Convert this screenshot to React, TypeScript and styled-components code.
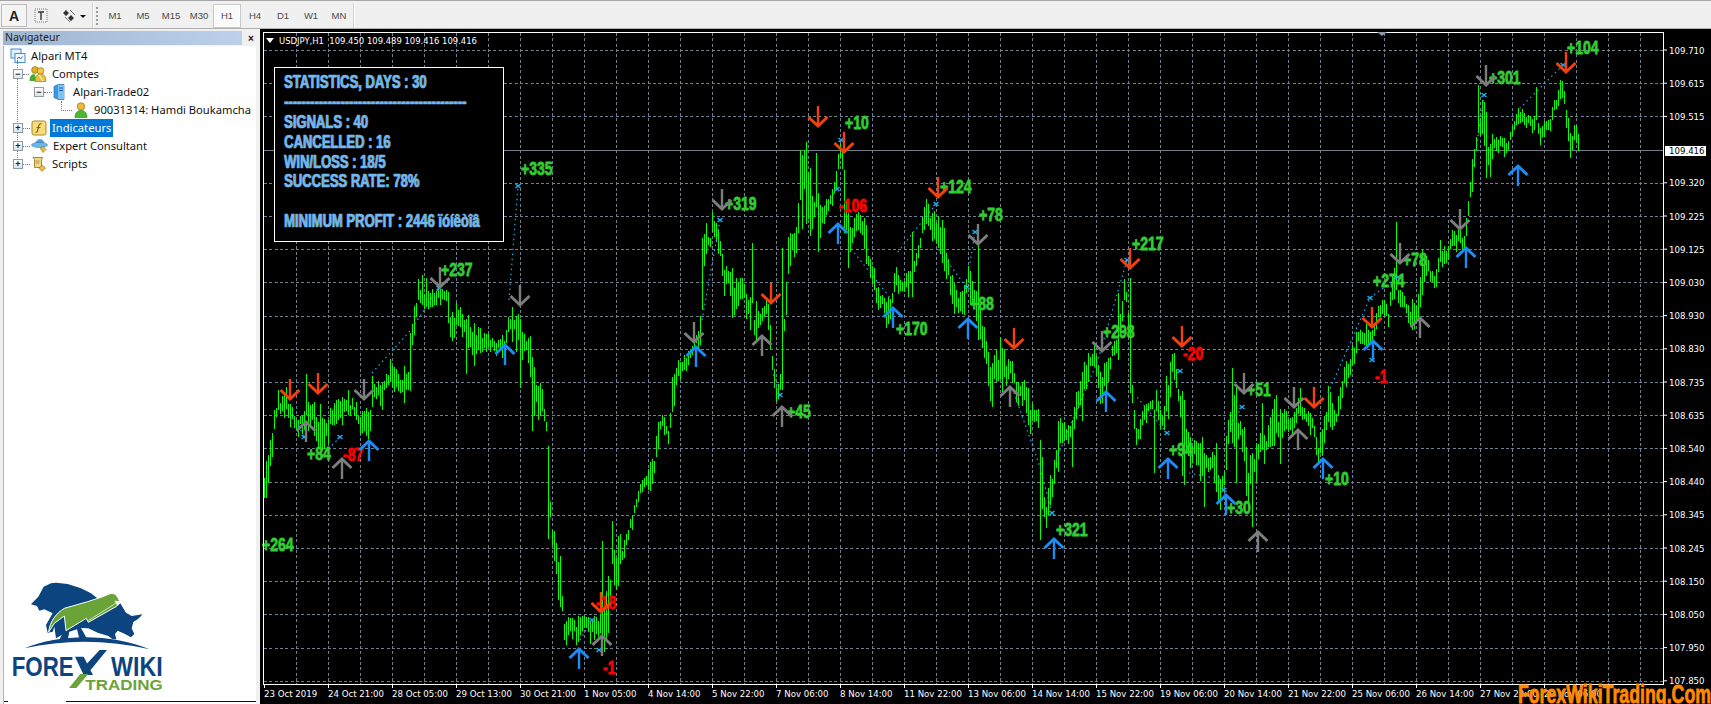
import React from "react";
import styled, { createGlobalStyle } from "styled-components";

const GlobalStyle = createGlobalStyle`
  html, body {
    margin: 0;
    padding: 0;
    background: #f0f0f0;
    overflow: hidden;
  }
`;

const UI_FONT = `"Noto Sans", "Liberation Sans", sans-serif`;
const HEAVY_FONT = `"Liberation Sans", sans-serif`;
const CHART_FONT = `"DejaVu Sans", "Liberation Sans", sans-serif`;

// ---- chart data, written as [x, top, bottom] in the coordinates of crops of the chart
type Key = [number, number, number];
type Region = { ox: number; oy: number; sy: number; keys: Key[]; spikes: Key[] };

const regions: Region[] = [
  {
    ox: 264,
    oy: 140,
    sy: 2.904,
    keys: [
      [0, 950, 1045], [15, 895, 995], [25, 810, 895], [40, 730, 810], [70, 740, 810], [100, 800, 850],
      [145, 740, 850], [170, 800, 930], [195, 780, 860], [230, 730, 830], [265, 750, 800], [290, 780, 860],
      [318, 770, 880], [325, 665, 780], [350, 700, 775], [380, 650, 720], [420, 680, 775], [438, 600, 730],
      [445, 500, 600], [462, 400, 510], [490, 430, 525], [520, 420, 480], [548, 430, 470], [555, 480, 605],
      [590, 460, 570], [620, 510, 625], [650, 545, 625], [690, 575, 615], [720, 560, 620], [733, 470, 590],
      [760, 500, 590], [785, 540, 640], [805, 630, 760], [820, 685, 830], [835, 710, 800], [850, 830, 890],
      [862, 1115, 1200], [877, 1100, 1330], [890, 1210, 1370], [900, 1380, 1480], [925, 1380, 1450],
      [945, 1375, 1480], [960, 1365, 1410], [975, 1400, 1450], [1000, 1370, 1470], [1030, 1260, 1500],
      [1045, 1200, 1300], [1060, 1150, 1280], [1075, 1180, 1215],
    ],
    spikes: [
      [128, 680, 800], [438, 560, 730], [603, 520, 680], [765, 155, 500], [770, 520, 720], [805, 630, 845],
      [853, 890, 1160], [1015, 1165, 1490], [1045, 1105, 1230],
    ],
  },
  {
    ox: 620,
    oy: 90,
    sy: 3,
    keys: [
      [60, 1180, 1200], [75, 1145, 1200], [100, 1095, 1200], [110, 990, 1100], [125, 960, 1020], [145, 1000, 1070],
      [155, 860, 990], [175, 790, 880], [200, 770, 860], [225, 720, 800], [240, 660, 770], [253, 365, 515],
      [270, 400, 510], [278, 350, 450], [300, 420, 540], [308, 505, 600], [325, 530, 580], [340, 545, 695],
      [365, 560, 630], [380, 575, 675], [400, 660, 790], [420, 660, 720], [440, 610, 695], [450, 690, 790],
      [458, 790, 890], [470, 880, 965], [480, 840, 910], [497, 590, 675], [505, 405, 540], [520, 420, 510],
      [532, 380, 475], [538, 200, 360], [550, 110, 360], [565, 210, 445], [601, 345, 455], [610, 345, 400],
      [630, 290, 370], [650, 225, 295], [662, 120, 190], [673, 240, 340], [683, 400, 525], [695, 400, 470],
      [712, 350, 420], [733, 350, 485], [745, 450, 590], [762, 540, 600], [772, 575, 685], [790, 600, 670],
      [805, 620, 710], [817, 585, 645], [825, 495, 600], [840, 570, 625], [865, 530, 620], [900, 440, 480],
      [915, 305, 410], [930, 340, 460], [945, 360, 450], [965, 400, 540], [985, 490, 590], [1000, 570, 680],
      [1020, 600, 690], [1035, 570, 650], [1045, 520, 600],
    ],
    spikes: [
      [248, 445, 660], [398, 460, 640], [488, 475, 900], [590, 190, 350], [673, 240, 430], [877, 425, 620],
    ],
  },
  {
    ox: 970,
    oy: 190,
    sy: 3,
    keys: [
      [45, 395, 520], [60, 475, 640], [75, 455, 570], [90, 455, 640], [110, 490, 590], [125, 470, 560],
      [140, 560, 680], [160, 540, 650], [175, 610, 745], [190, 640, 720], [205, 610, 745], [225, 930, 1080],
      [240, 860, 960], [250, 860, 930], [260, 710, 860], [270, 680, 770], [285, 690, 760], [300, 700, 770],
      [318, 615, 700], [335, 530, 660], [355, 450, 575], [375, 470, 540], [390, 500, 640], [405, 515, 640],
      [425, 470, 510], [445, 380, 510], [465, 230, 300], [490, 610, 775], [500, 690, 800], [520, 645, 700],
      [545, 620, 670], [560, 610, 680], [575, 670, 740], [595, 545, 690], [607, 470, 550], [625, 570, 660],
      [640, 610, 850], [650, 710, 850], [670, 750, 790], [690, 730, 880], [720, 780, 840], [735, 740, 900],
      [745, 860, 970], [760, 840, 890], [770, 730, 840], [782, 570, 770], [810, 670, 780], [825, 710, 910],
      [835, 780, 970], [858, 760, 850], [875, 710, 770], [885, 710, 850], [900, 660, 780], [915, 615, 780],
      [930, 640, 810], [945, 640, 710], [965, 670, 770], [985, 600, 700], [1010, 670, 710], [1030, 630, 780],
      [1040, 760, 830], [1060, 690, 830], [1072, 580, 700],
    ],
    spikes: [
      [25, 165, 450], [212, 750, 1050], [307, 690, 830], [445, 310, 510], [480, 265, 610], [552, 660, 850],
      [700, 790, 950], [795, 590, 880], [848, 790, 1010], [878, 640, 780],
    ],
  },
  {
    ox: 1200,
    oy: 170,
    sy: 3,
    keys: [
      [410, 730, 780], [422, 620, 720], [435, 580, 630], [460, 505, 635], [470, 480, 530], [500, 460, 535],
      [520, 470, 510], [535, 390, 440], [550, 385, 440], [565, 415, 480], [575, 300, 400], [590, 330, 400],
      [605, 350, 410], [625, 400, 480], [640, 410, 490], [655, 365, 440], [680, 225, 345], [695, 300, 340],
      [710, 295, 355], [720, 210, 300], [740, 240, 270], [752, 180, 230], [775, 170, 230], [790, 205, 240],
      [805, 80, 145], [810, 0, 130],
    ],
    spikes: [[585, 155, 360], [663, 240, 375]],
  },
  {
    ox: 1400,
    oy: 20,
    sy: 3,
    keys: [
      [222, 380, 450], [230, 320, 370], [246, 240, 370], [270, 365, 475], [278, 320, 400], [290, 350, 380],
      [305, 320, 405], [313, 360, 437], [325, 350, 380], [333, 320, 360], [342, 290, 325], [350, 260, 300],
      [365, 265, 300], [380, 285, 310], [392, 275, 320], [415, 300, 355], [430, 310, 350], [450, 285, 320],
      [462, 225, 290], [480, 195, 260], [490, 150, 270], [500, 260, 345], [510, 330, 405], [522, 315, 380],
      [535, 315, 390],
    ],
    spikes: [[236, 195, 340], [258, 275, 475], [408, 200, 300]],
  },
];

const toPage = (r: Region, [x, t, b]: Key): Key => [r.ox + x / 3, r.oy + t / r.sy, r.oy + b / r.sy];

const buildBars = () => {
  const keys = regions.flatMap((r) => r.keys.map((k) => toPage(r, k))).sort((a, b) => a[0] - b[0]);
  const spikes = regions.flatMap((r) => r.spikes.map((k) => toPage(r, k)));
  const spikeAt = new Map(spikes.map((s) => [264 + Math.round((s[0] - 264) / 2) * 2, s]));
  let seed = 4711;
  const rnd = () => {
    seed = (seed * 1103515245 + 12345) % 2147483648;
    return seed / 2147483648;
  };
  let d = "";
  let i = 0;
  for (let x = 264; x <= 1578; x += 2) {
    while (i < keys.length - 2 && keys[i + 1][0] < x) i++;
    const [x0, t0, b0] = keys[i];
    const [x1, t1, b1] = keys[i + 1];
    const f = Math.min(1, Math.max(0, (x - x0) / (x1 - x0 || 1)));
    const top = t0 + (t1 - t0) * f;
    const bottom = b0 + (b1 - b0) * f;
    const span = Math.max(bottom - top, 8);
    let y0 = top + rnd() * span * 0.42;
    let y1 = bottom - rnd() * span * 0.42;
    if (y1 - y0 < 8) y1 = y0 + 8 + rnd() * 6;
    if (rnd() < 0.12) y0 -= span * 0.3;
    if (rnd() < 0.12) y1 += span * 0.3;
    const spike = spikeAt.get(x);
    if (spike) {
      y0 = spike[1];
      y1 = spike[2];
    }
    d += `M${x + 0.5} ${y0.toFixed(0)}V${y1.toFixed(0)}`;
  }
  return d;
};

const BARS = buildBars();

const priceLabels = [
  "109.710", "109.615", "109.515", "", "109.320", "109.225", "109.125", "109.030", "108.930", "108.830",
  "108.735", "108.635", "108.540", "108.440", "108.345", "108.245", "108.150", "108.050", "107.950", "107.850",
];
const gridY = (i: number) => 50 + i * 33.2;

const timeLabels = [
  "23 Oct 2019", "24 Oct 21:00", "28 Oct 05:00", "29 Oct 13:00", "30 Oct 21:00", "1 Nov 05:00", "4 Nov 14:00",
  "5 Nov 22:00", "7 Nov 06:00", "8 Nov 14:00", "11 Nov 22:00", "13 Nov 06:00", "14 Nov 14:00", "15 Nov 22:00",
  "19 Nov 06:00", "20 Nov 14:00", "21 Nov 22:00", "25 Nov 06:00", "26 Nov 14:00", "27 Nov 22:00", "29 Nov 06:00",
];

type ArrowKind = "red" | "gray" | "blue";
const arrowColors: Record<ArrowKind, string> = { red: "#f4400f", gray: "#7d7d7d", blue: "#1e8cf5" };

// x, tip y, colour, direction: page coordinates
const arrows: [number, number, ArrowKind, "up" | "down"][] = [
  [290, 400, "red", "down"], [318, 394, "red", "down"], [306, 421, "gray", "up"], [342, 458, "gray", "up"],
  [364, 400, "gray", "down"], [369, 440, "blue", "up"], [440, 288, "gray", "down"], [505, 344, "blue", "up"],
  [520, 306, "gray", "down"], [601, 613, "red", "down"], [579, 648, "blue", "up"], [602, 635, "gray", "up"],
  [694, 343, "gray", "down"], [696, 346, "blue", "up"], [722, 210, "gray", "down"], [771, 304, "red", "down"],
  [762, 335, "gray", "up"], [782, 406, "gray", "up"], [818, 127, "red", "down"], [844, 153, "red", "down"],
  [838, 223, "blue", "up"], [893, 307, "blue", "up"], [938, 198, "red", "down"], [968, 318, "blue", "up"],
  [978, 245, "gray", "down"], [1014, 349, "red", "down"], [1010, 386, "gray", "up"], [1054, 538, "blue", "up"],
  [1102, 352, "gray", "down"], [1106, 391, "blue", "up"], [1130, 269, "red", "down"], [1182, 347, "red", "down"],
  [1168, 458, "blue", "up"], [1244, 394, "gray", "down"], [1226, 494, "blue", "up"], [1258, 531, "gray", "up"],
  [1294, 408, "gray", "down"], [1314, 408, "red", "down"], [1298, 429, "gray", "up"], [1323, 458, "blue", "up"],
  [1372, 328, "red", "down"], [1373, 340, "blue", "up"], [1400, 264, "gray", "down"], [1420, 317, "gray", "up"],
  [1460, 230, "gray", "down"], [1466, 247, "blue", "up"], [1486, 86, "gray", "down"], [1566, 73, "red", "down"],
  [1518, 165, "blue", "up"],
];

// x, centre y, text: page coordinates
const signals: [number, number, string][] = [
  [521, 169, "+335"], [441, 270, "+237"], [307, 454, "+84"], [343, 455, "-87"], [262, 545, "+264"],
  [603, 668, "-1"], [596, 603, "-18"], [725, 204, "+319"], [787, 412, "+45"], [839, 206, "-106"],
  [845, 123, "+10"], [940, 187, "+124"], [896, 329, "+170"], [970, 304, "+88"], [979, 215, "+78"],
  [1132, 244, "+217"], [1103, 332, "+298"], [1183, 354, "-20"], [1247, 390, "+51"], [1169, 450, "+94"],
  [1227, 508, "+30"], [1056, 530, "+321"], [1325, 479, "+10"], [1375, 377, "-1"], [1373, 281, "+274"],
  [1403, 260, "+78"], [1489, 78, "+301"], [1567, 48, "+104"],
];

const crosses: [number, number][] = [
  [304, 437], [340, 437], [439, 288], [518, 186], [592, 620], [599, 650], [720, 220], [780, 395], [837, 189],
  [841, 140], [936, 204], [967, 287], [1052, 513], [975, 232], [1180, 371], [1167, 433], [1224, 490],
  [1242, 407], [1370, 298], [1372, 360], [1398, 277], [1484, 95], [1563, 65], [1127, 260],
];

const dots: number[][] = [
  [292, 412, 304, 437], [340, 437, 322, 456], [372, 373, 410, 331, 439, 288],
  [509, 300, 518, 186], [580, 640, 592, 620], [720, 220, 702, 320], [780, 395, 773, 373], [837, 189, 818, 216],
  [848, 245, 892, 300], [936, 204, 897, 253], [966, 287, 937, 247], [975, 232, 970, 263],
  [1052, 513, 1040, 467, 1013, 390], [1056, 460, 1098, 360, 1127, 260], [1180, 371, 1175, 377], [1167, 433, 1137, 397],
  [1184, 472, 1224, 480], [1242, 407, 1226, 433], [1328, 393, 1370, 298], [1370, 298, 1398, 277], [1484, 95, 1473, 170],
  [1563, 65, 1520, 108],
];

// ---- page
const Page = styled.div`
  width: 1711px;
  height: 704px;
  display: flex;
  flex-direction: column;
  font-family: ${UI_FONT};
  overflow: hidden;
`;

const Toolbar = styled.div`
  height: 29px;
  box-sizing: border-box;
  border-top: 1px solid #a6a6a6;
  border-bottom: 1px solid #b0b0b0;
  display: flex;
  align-items: center;
  background: #f0f0f0;
  padding-top: 2px;
`;

const ToolGroup = styled.div`
  display: flex;
  align-items: center;
  height: 100%;
  border-right: 1px solid #d0d0d0;
  box-shadow: 1px 0 0 #fff;
`;

const FontButton = styled.div`
  width: 24px;
  height: 21px;
  margin-left: 1px;
  border: 1px solid #bdbdbd;
  background: #f4f4f4;
  display: flex;
  align-items: center;
  justify-content: center;
  font: bold 14px "Liberation Sans", sans-serif;
  color: #222;
`;

const IconSlot = styled.div<{ $width: number }>`
  width: ${(p) => p.$width}px;
  display: flex;
  align-items: center;
  justify-content: center;
`;

const Gripper = styled.div`
  width: 2px;
  height: 18px;
  box-sizing: border-box;
  margin: 0 3px;
  border-left: 2px dotted #9a9a9a;
`;

const TimeButton = styled.div<{ $active?: boolean }>`
  width: ${(p) => (p.$active ? 26 : 28)}px;
  height: 22px;
  margin: 0 ${(p) => (p.$active ? 1 : 0)}px;
  box-sizing: border-box;
  display: flex;
  align-items: center;
  justify-content: center;
  font: 9.5px "Liberation Sans", sans-serif;
  color: #4a4a4a;
  border: 1px solid ${(p) => (p.$active ? "#fff" : "transparent")};
  outline: ${(p) => (p.$active ? "1px solid #c8c8c8" : "none")};
  background: ${(p) => (p.$active ? "#fafafa" : "transparent")};
`;

const Body = styled.div`
  flex: 1;
  display: flex;
  min-height: 0;
`;

const Navigator = styled.aside`
  width: 260px;
  flex: none;
  box-sizing: border-box;
  padding: 2px 4px 0 3px;
  display: flex;
  flex-direction: column;
`;

const NavHeader = styled.div`
  height: 14px;
  display: flex;
  align-items: center;
  justify-content: space-between;
  flex: none;
`;

const NavTitle = styled.div`
  flex: 1;
  height: 100%;
  margin-right: 4px;
  padding-left: 2px;
  line-height: 13px;
  font-size: 10.5px;
  color: #222;
  background: linear-gradient(90deg, #9fb6d0, #bcd0ea);
`;

const NavClose = styled.div`
  width: 10px;
  font: bold 10px "Liberation Sans", sans-serif;
  color: #111;
  text-align: center;
`;

const NavBody = styled.div`
  flex: 1;
  min-height: 0;
  background: #fff;
  border-left: 1px solid #b5b5b5;
  display: flex;
  flex-direction: column;
  margin-top: 1px;
`;

const Tree = styled.ul`
  list-style: none;
  margin: 0;
  padding: 1px 0 0 0;
  position: relative;
  &::before {
    content: "";
    position: absolute;
    left: 13px;
    top: 14px;
    height: 106px;
    border-left: 1px dotted #777;
  }
`;

const TreeRow = styled.li<{ $level: number }>`
  height: 18px;
  display: flex;
  align-items: center;
  padding-left: ${(p) => p.$level}px;
  font-size: 11.2px;
  color: #111;
  white-space: nowrap;
`;

const Expander = styled.span`
  width: 8px;
  height: 8px;
  flex: none;
  box-sizing: content-box;
  border: 1px solid #8f9aa6;
  background: linear-gradient(#fff, #dde2e8);
  position: relative;
  z-index: 1;
  display: flex;
  align-items: center;
  justify-content: center;
  font: bold 9px/8px "Liberation Sans", sans-serif;
  color: #222;
`;

const Connector = styled.span<{ $width: number }>`
  width: ${(p) => p.$width}px;
  flex: none;
  border-bottom: 1px dotted #777;
  margin-right: 1px;
`;

const Elbow = styled.span`
  width: 10px;
  height: 9px;
  margin: -9px 2px 0 0;
  flex: none;
  border-left: 1px dotted #777;
  border-bottom: 1px dotted #777;
`;

const TreeIcon = styled.svg<{ $width?: number; $gap?: number; $shift?: number }>`
  width: ${(p) => p.$width ?? 16}px;
  height: 16px;
  flex: none;
  margin-left: ${(p) => p.$shift ?? 0}px;
  margin-right: ${(p) => p.$gap ?? 5}px;
`;

const RowLabel = styled.span<{ $selected?: boolean }>`
  height: 18px;
  line-height: 17px;
  padding: 0 2px;
  margin-left: -2px;
  color: ${(p) => (p.$selected ? "#fff" : "#111")};
  background: ${(p) => (p.$selected ? "#0078d7" : "transparent")};
`;

const LogoWrap = styled.div`
  margin-top: auto;
  flex: none;
  line-height: 0;
`;

const TabEdge = styled.div`
  flex: none;
  height: 3px;
  display: flex;
`;

const TabEdgeLine = styled.div<{ $width?: number; $gap?: number }>`
  border-top: 1px solid #111;
  width: ${(p) => (p.$width ? `${p.$width}px` : "auto")};
  flex: ${(p) => (p.$width ? "none" : "1")};
  margin-left: ${(p) => p.$gap ?? 0}px;
`;

const ChartPane = styled.main`
  flex: 1;
  position: relative;
  background: #000;
  min-width: 0;
`;

const ChartSvg = styled.svg`
  display: block;
  width: 1451px;
  height: 675px;
`;

const AxisText = styled.text<{ $dark?: boolean }>`
  font-family: ${CHART_FONT};
  font-size: 8.6px;
  fill: ${(p) => (p.$dark ? "#000" : "#fff")};
`;

const ChartTitle = styled.text`
  font-family: ${CHART_FONT};
  font-size: 8.45px;
  fill: #fff;
`;

const SignalText = styled.text<{ $loss: boolean }>`
  font-family: ${HEAVY_FONT};
  font-weight: 700;
  font-size: 17.5px;
  fill: ${(p) => (p.$loss ? "#ff0000" : "#32cd32")};
  stroke: ${(p) => (p.$loss ? "#ff0000" : "#32cd32")};
  stroke-width: 0.8px;
`;

const StatsPanel = styled.section`
  position: absolute;
  left: 14px;
  top: 38px;
  width: 228px;
  height: 173px;
  box-sizing: content-box;
  border: 1px solid #fff;
  background: #000;
`;

const StatsList = styled.div`
  padding: 5px 0 0 9px;
  display: flex;
  flex-direction: column;
  align-items: flex-start;
`;

const StatsLine = styled.div`
  height: 19.9px;
  line-height: 19.9px;
  font-family: ${HEAVY_FONT};
  font-weight: 700;
  font-size: 17.5px;
  color: #6fb8f2;
  white-space: nowrap;
  transform: scaleX(0.745);
  transform-origin: 0 50%;
  -webkit-text-stroke: 0.7px #6fb8f2;
  text-shadow: 1.1px 0.3px 0 #6d5f2c;
`;

const Watermark = styled.div`
  position: absolute;
  right: 0;
  bottom: 0;
  height: 20px;
  line-height: 20px;
  font-family: ${HEAVY_FONT};
  font-weight: 700;
  font-size: 25px;
  color: #ff8a00;
  white-space: nowrap;
  transform: scaleX(0.71);
  transform-origin: 100% 50%;
  -webkit-text-stroke: 0.8px #ff8a00;
`;

const Arrow: React.FC<{ x: number; y: number; kind: ArrowKind; dir: "up" | "down" }> = ({ x, y, kind, dir }) => {
  const s = dir === "up" ? 1 : -1;
  const color = arrowColors[kind];
  return (
    <g fill="none" stroke={color}>
      <path d={`M${x} ${y + s}V${y + s * 21}`} strokeWidth={2.4} />
      <path d={`M${x - 9.5} ${y + s * 10}L${x} ${y + s}L${x + 9.5} ${y + s * 10}`} strokeWidth={3} />
    </g>
  );
};

const Cross: React.FC<{ x: number; y: number }> = ({ x, y }) => (
  <path
    d={`M${x - 2.5} ${y - 2}L${x + 2.5} ${y + 2}M${x - 2.5} ${y + 2}L${x + 2.5} ${y - 2}`}
    stroke="#19aef0"
    strokeWidth={1.5}
    fill="none"
  />
);

const Chart: React.FC = () => (
  <ChartSvg viewBox="260 29 1451 675">
    <g stroke="#6f7f90" strokeWidth={1} strokeDasharray="3 2.33" shapeRendering="crispEdges">
      {priceLabels.map((_, i) => (
        <line key={i} x1={264} x2={1663} y1={Math.round(gridY(i)) + 0.5} y2={Math.round(gridY(i)) + 0.5} />
      ))}
      {Array.from({ length: 43 }, (_, i) => (
        <line key={i} x1={296.5 + i * 32} x2={296.5 + i * 32} y1={33} y2={684} />
      ))}
    </g>
    <line x1={264} x2={1663} y1={150.5} y2={150.5} stroke="#707c8a" shapeRendering="crispEdges" />
    <path d={BARS} stroke="#00ff00" strokeWidth={1} fill="none" shapeRendering="crispEdges" />
    <g fill="none" stroke="#19aef0" strokeWidth={1.2} strokeDasharray="1.5 3.5">
      {dots.map((pts, i) => (
        <polyline key={i} points={pts.join(" ")} />
      ))}
    </g>
    {crosses.map(([x, y], i) => (
      <Cross key={i} x={x} y={y} />
    ))}
    {signals.map(([x, y, text], i) => (
      <SignalText key={i} transform={`translate(${x} ${y + 6}) scale(0.8 1)`} $loss={text.startsWith("-")}>
        {text}
      </SignalText>
    ))}
    {arrows.map(([x, y, kind, dir], i) => (
      <Arrow key={i} x={x} y={y} kind={kind} dir={dir} />
    ))}

    <path d="M263.5 32.5H1663.5V684.5H263.5Z" fill="none" stroke="#fff" shapeRendering="crispEdges" />
    <path d="M1377 32H1387L1382 36Z" fill="#8b98a5" />
    <path d="M266 38H274L270 43Z" fill="#fff" />
    <ChartTitle x={279} y={44}>
      USDJPY,H1 &nbsp;109.450 109.489 109.416 109.416
    </ChartTitle>

    {priceLabels.map(
      (label, i) =>
        label && (
          <g key={label}>
            <line x1={1663} x2={1667} y1={gridY(i)} y2={gridY(i)} stroke="#fff" />
            <AxisText x={1669} y={gridY(i) + 3.5}>
              {label}
            </AxisText>
          </g>
        ),
    )}
    <rect x={1665} y={146} width={41} height={10} fill="#fff" />
    <AxisText x={1669} y={154} $dark>
      109.416
    </AxisText>

    {timeLabels.map((label, i) => (
      <g key={label}>
        <line x1={264.5 + i * 64} x2={264.5 + i * 64} y1={684} y2={688} stroke="#fff" />
        <AxisText x={264 + i * 64} y={697}>
          {label}
        </AxisText>
      </g>
    ))}
  </ChartSvg>
);

const Logo: React.FC = () => (
  <svg width={252} height={141} viewBox="9 0 756 423">
    <path
      fill="#0b447f"
      d="M90 133L100 122L112 110L128 80L150 70L165 68L200 72L240 85L270 100L293 118L330 115L355 125L375 158L392 168L425 163L412 176L397 186L392 205L400 222L390 232L372 222L350 212L342 222L346 238L335 238L322 228L290 218L262 205L240 204L258 236L235 236L228 208L205 215L200 240L175 240L182 225L165 235L160 200L155 215L140 218L135 195L155 160L130 148L115 152L108 138Z"
    />
    <path
      fill="#6aa338"
      stroke="#fff"
      strokeWidth={3}
      d="M143 216C146 185 165 160 190 145L260 125L300 112L330 100C345 100 350 110 358 128L345 140L262 187L256 175L195 212L190 168L160 190Z"
    />
    <path d="M262 182L350 126" stroke="#fff" strokeWidth={2} />
    <path d="M340 122L358 124L350 138Z" fill="#fff" />
    <path fill="#0b447f" d="M70 265C180 220 330 220 446 268C320 238 190 238 70 265Z" />
    <text x={32} y={348} fontFamily="Liberation Sans, sans-serif" fontWeight={700} fontSize={84} fill="#0b447f" textLength={186} lengthAdjust="spacingAndGlyphs">
      FORE
    </text>
    <text x={330} y={348} fontFamily="Liberation Sans, sans-serif" fontWeight={700} fontSize={84} fill="#0b447f" textLength={155} lengthAdjust="spacingAndGlyphs">
      WIKI
    </text>
    <path fill="#0b447f" d="M222 290H248L276 345H248ZM240 330L296 270H318L262 338Z" />
    <path fill="#6aa338" d="M204 384L238 342H262L226 384Z" />
    <text x={253} y={390} fontFamily="Liberation Sans, sans-serif" fontWeight={700} fontSize={42} fill="#6aa338" textLength={232} lengthAdjust="spacingAndGlyphs">
      TRADING
    </text>
  </svg>
);

const RootIcon = () => (
  <TreeIcon viewBox="0 0 16 16">
    <rect x="1" y="1" width="10" height="9" fill="#dfeefb" stroke="#4a8cc8" />
    <rect x="5" y="5.5" width="10" height="9" fill="#f2f8ff" stroke="#4a8cc8" />
    <path d="M7 11l2-2 1.5 2 2-2.5" stroke="#3a6fb0" fill="none" />
  </TreeIcon>
);

const AccountsIcon = () => (
  <TreeIcon viewBox="0 0 18 16" $width={18} $shift={-1}>
    <circle cx="6" cy="4" r="3.4" fill="#e0ae2a" stroke="#8a6a10" strokeWidth=".6" />
    <circle cx="11.5" cy="5" r="3.4" fill="#f0c848" stroke="#8a6a10" strokeWidth=".6" />
    <path d="M0.5 15c0-5 2-7 5-7l2 7z" fill="#3fae2e" />
    <path d="M6 15.5c0-5 2-7.5 5.5-7.5s5.5 2.500 5.500 7.500z" fill="#e8c040" stroke="#8a6a10" strokeWidth=".6" />
    <path d="M10 9l4 6" stroke="#fff" strokeWidth="1" />
  </TreeIcon>
);

const ServerIcon = () => (
  <TreeIcon viewBox="0 0 12 16" $width={12} $gap={8}>
    <path d="M1 2.500L5 0.500H11V15.500H5L1 13.500Z" fill="#3f97e0" stroke="#1d5fa5" strokeWidth=".6" />
    <rect x="5" y="1" width="6" height="14" fill="#7cc3f5" />
    <path d="M6 4h4M6 6.500h4" stroke="#1d5fa5" />
  </TreeIcon>
);

const UserIcon = () => (
  <TreeIcon viewBox="0 0 14 16" $width={14} $gap={6}>
    <circle cx="7" cy="4.500" r="3.800" fill="#e8bb3a" stroke="#8a6a10" strokeWidth=".6" />
    <path d="M1 15.500c0-5 2.500-7 6-7s6 2 6 7z" fill="#4cb82f" stroke="#2a7f18" strokeWidth=".6" />
  </TreeIcon>
);

const FunctionIcon = () => (
  <TreeIcon viewBox="0 0 16 16">
    <rect x="1" y="1" width="14" height="14" rx="2" fill="#f6dc7c" stroke="#a88a2a" />
    <path d="M10.500 4c-2-.5-2.500.500-3 3l-1 4c-.3 1-1 1.500-2 1M5.500 7.500h4" stroke="#8a6510" strokeWidth="1.200" fill="none" />
  </TreeIcon>
);

const ExpertIcon = () => (
  <TreeIcon viewBox="0 0 17 16" $width={17}>
    <path d="M4.500 6c.5-3.500 3-5 5-4.500s3.500 2 3.500 4.500z" fill="#4fa3da" stroke="#2a6fa5" strokeWidth=".5" />
    <ellipse cx="8.500" cy="7" rx="8" ry="2.600" fill="#6bb8e8" stroke="#2a6fa5" strokeWidth=".5" />
    <path d="M9 10l3-1.500 3 3-3 3z" fill="#e8c040" stroke="#8a6a10" strokeWidth=".6" />
  </TreeIcon>
);

const ScriptsIcon = () => (
  <TreeIcon viewBox="0 0 16 16">
    <path d="M2 1.500h9.500l-1 2v8h-7v-8z" fill="#f2d98a" stroke="#a88a2a" />
    <path d="M4.500 5h4M4.500 7h4" stroke="#8a7a3a" strokeWidth=".7" />
    <path d="M11 9l3.500 3-3.500 3.500L8 12z" fill="#e8c040" stroke="#8a6a10" strokeWidth=".6" />
  </TreeIcon>
);

const Nav: React.FC = () => (
  <Navigator>
    <NavHeader>
      <NavTitle>Navigateur</NavTitle>
      <NavClose>×</NavClose>
    </NavHeader>
    <NavBody>
      <Tree>
        <TreeRow $level={6}>
          <RootIcon />
          <RowLabel>Alpari MT4</RowLabel>
        </TreeRow>
        <TreeRow $level={9}>
          <Expander>−</Expander>
          <Connector $width={6} />
          <AccountsIcon />
          <RowLabel>Comptes</RowLabel>
        </TreeRow>
        <TreeRow $level={30}>
          <Expander>−</Expander>
          <Connector $width={8} />
          <ServerIcon />
          <RowLabel>Alpari-Trade02</RowLabel>
        </TreeRow>
        <TreeRow $level={57}>
          <Elbow />
          <UserIcon />
          <RowLabel>90031314: Hamdi Boukamcha</RowLabel>
        </TreeRow>
        <TreeRow $level={9}>
          <Expander>+</Expander>
          <Connector $width={7} />
          <FunctionIcon />
          <RowLabel $selected>Indicateurs</RowLabel>
        </TreeRow>
        <TreeRow $level={9}>
          <Expander>+</Expander>
          <Connector $width={7} />
          <ExpertIcon />
          <RowLabel>Expert Consultant</RowLabel>
        </TreeRow>
        <TreeRow $level={9}>
          <Expander>+</Expander>
          <Connector $width={7} />
          <ScriptsIcon />
          <RowLabel>Scripts</RowLabel>
        </TreeRow>
      </Tree>
      <LogoWrap>
        <Logo />
      </LogoWrap>
      <TabEdge>
        <TabEdgeLine $width={4} />
        <TabEdgeLine $gap={58} />
      </TabEdge>
    </NavBody>
  </Navigator>
);

const stats = [
  "STATISTICS, DAYS : 30",
  "------------------------------------------",
  "SIGNALS : 40",
  "CANCELLED : 16",
  "WIN/LOSS : 18/5",
  "SUCCESS RATE: 78%",
  "\u00a0",
  "MINIMUM PROFIT : 2446 ïóíêòîâ",
];

const timeframes = ["M1", "M5", "M15", "M30", "H1", "H4", "D1", "W1", "MN"];

export default function App() {
  return (
    <>
      <GlobalStyle />
      <Page>
        <Toolbar>
          <ToolGroup>
            <FontButton>A</FontButton>
            <IconSlot $width={27}>
              <svg width="14" height="15" viewBox="0 0 14 15">
                <rect x="1" y="1" width="12" height="13" fill="none" stroke="#777" strokeDasharray="1 1" />
                <path d="M4 4h6M7 4v8" stroke="#333" strokeWidth="1.400" />
              </svg>
            </IconSlot>
            <IconSlot $width={38}>
              <svg width="26" height="14" viewBox="0 0 26 14">
                <path d="M3 4l3-3 3 3-3 3z M8 9l3-3 3 3-3 3z" fill="#333" />
                <path d="M5 8l5 5M10 1l5 5" stroke="#777" />
                <path d="M20 6h6l-3 3z" fill="#111" />
              </svg>
            </IconSlot>
          </ToolGroup>
          <ToolGroup>
            <Gripper />
            {timeframes.map((t) => (
              <TimeButton key={t} $active={t === "H1"}>
                {t}
              </TimeButton>
            ))}
          </ToolGroup>
        </Toolbar>
        <Body>
          <Nav />
          <ChartPane>
            <Chart />
            <StatsPanel>
              <StatsList>
                {stats.map((line, i) => (
                  <StatsLine key={i}>{line}</StatsLine>
                ))}
              </StatsList>
            </StatsPanel>
            <Watermark>ForexWikiTrading.Com</Watermark>
          </ChartPane>
        </Body>
      </Page>
    </>
  );
}
